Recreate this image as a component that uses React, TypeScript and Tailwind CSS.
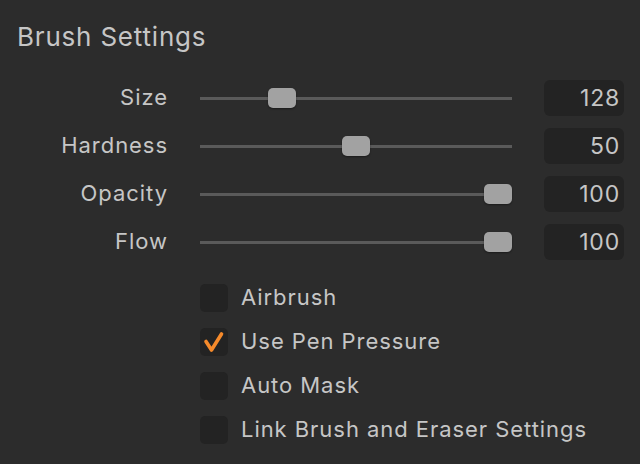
import React from "react";

const sliders = [
  { label: "Size", value: "128", left: 68 },
  { label: "Hardness", value: "50", left: 142 },
  { label: "Opacity", value: "100", left: 284 },
  { label: "Flow", value: "100", left: 284 },
];

const checks = [
  { label: "Airbrush", checked: false },
  { label: "Use Pen Pressure", checked: true },
  { label: "Auto Mask", checked: false },
  { label: "Link Brush and Eraser Settings", checked: false },
];

export default function App() {
  return (
    <div
      className="w-[640px] h-[464px] bg-[#2c2c2c] text-[#c6c6c6] overflow-hidden"
      style={{ fontFamily: "Inter, 'Noto Sans', sans-serif" }}
    >
      <div className="pt-[21px] pl-[17px] h-[53px] text-[26px] leading-[32px] tracking-[0.8px]">Brush Settings</div>
      <div className="mt-[21px] flex flex-col">
        {sliders.map((s) => (
          <div key={s.label} className="flex items-center h-[48px]">
            <div className="w-[168px] text-right text-[22px] leading-[24px] tracking-[0.95px] mb-[2px]">{s.label}</div>
            <div className="ml-[32px] w-[312px] h-[20px] relative flex items-center">
              <div className="w-full h-[3px] bg-[#5a5a5a]" />
              <div
                className="absolute top-0 w-[28px] h-[20px] rounded-[5px] bg-[#a2a2a2] shadow-[0_1px_2px_rgba(0,0,0,0.4)]"
                style={{ left: s.left }}
              />
            </div>
            <div className="ml-[32px] w-[80px] h-[36px] rounded-[6px] bg-[#232323] flex items-center justify-end pr-[4px] text-[23px] tracking-[0.8px]">
              {s.value}
            </div>
          </div>
        ))}
      </div>
      <div className="mt-[10px] flex flex-col">
        {checks.map((c) => (
          <div key={c.label} className="flex items-center h-[44px] pl-[200px]">
            <div className="w-[28px] h-[28px] rounded-[5px] bg-[#232323] flex items-center justify-center">
              {c.checked && (
                <svg width="28" height="28" viewBox="0 0 28 28">
                  <path
                    d="M6 13.5 L11.5 22 L21.5 6"
                    fill="none"
                    stroke="#f58a2b"
                    strokeWidth="3.6"
                    strokeLinecap="round"
                    strokeLinejoin="round"
                  />
                </svg>
              )}
            </div>
            <div className="ml-[13px] text-[22px] leading-[24px] tracking-[0.95px] mb-[2px]">{c.label}</div>
          </div>
        ))}
      </div>
    </div>
  );
}
